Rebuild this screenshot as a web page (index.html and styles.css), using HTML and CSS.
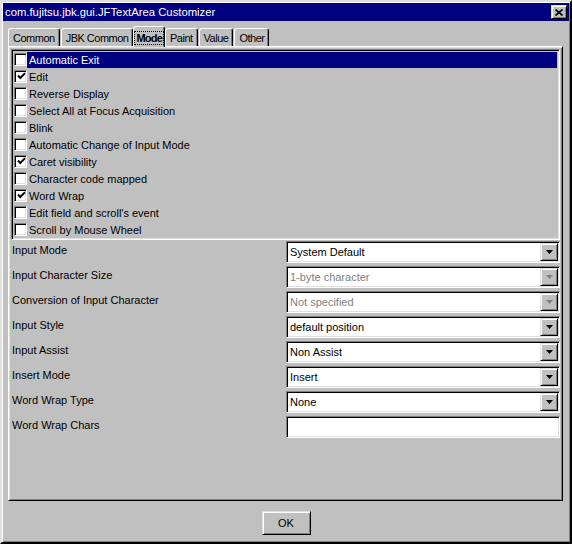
FILE: index.html
```html
<!DOCTYPE html>
<html lang="en">
<head>
    <meta charset="UTF-8">
    <title>com.fujitsu.jbk.gui.JFTextArea Customizer</title>
    <link rel="stylesheet" href="styles.css">
</head>
<body>

    <div class="window">
        <div class="titlebar">
            <span class="title">com.fujitsu.jbk.gui.JFTextArea Customizer</span>
            <button class="close">
                <svg width="8" height="7" viewBox="0 0 8 7"><path d="M0.5 0.5 L7.5 6.5 M7.5 0.5 L0.5 6.5" stroke="#000" stroke-width="1.7" fill="none"/></svg>
            </button>
        </div>

        <div class="body">
            <div class="tabs">
                <div class="tab">Common</div>
                <div class="tab">JBK Common</div>
                <div class="tab selected"><span class="focus">Mode</span></div>
                <div class="tab">Paint</div>
                <div class="tab">Value</div>
                <div class="tab">Other</div>
            </div>

            <div class="panel">
                <div class="list">
                    <div class="item"><span class="check"></span><span class="label active">Automatic Exit</span></div>
                    <div class="item"><span class="check on"><svg width="9" height="9" viewBox="0 0 9 9"><path d="M1 3.5 L3.3 6 L8 1.2" stroke="#000" stroke-width="1.9" fill="none"/></svg></span><span class="label">Edit</span></div>
                    <div class="item"><span class="check"></span><span class="label">Reverse Display</span></div>
                    <div class="item"><span class="check"></span><span class="label">Select All at Focus Acquisition</span></div>
                    <div class="item"><span class="check"></span><span class="label">Blink</span></div>
                    <div class="item"><span class="check"></span><span class="label">Automatic Change of Input Mode</span></div>
                    <div class="item"><span class="check on"><svg width="9" height="9" viewBox="0 0 9 9"><path d="M1 3.5 L3.3 6 L8 1.2" stroke="#000" stroke-width="1.9" fill="none"/></svg></span><span class="label">Caret visibility</span></div>
                    <div class="item"><span class="check"></span><span class="label">Character code mapped</span></div>
                    <div class="item"><span class="check on"><svg width="9" height="9" viewBox="0 0 9 9"><path d="M1 3.5 L3.3 6 L8 1.2" stroke="#000" stroke-width="1.9" fill="none"/></svg></span><span class="label">Word Wrap</span></div>
                    <div class="item"><span class="check"></span><span class="label">Edit field and scroll's event</span></div>
                    <div class="item"><span class="check"></span><span class="label">Scroll by Mouse Wheel</span></div>
                </div>

                <div class="form">
                    <div class="row">
                        <span class="name">Input Mode</span>
                        <div class="combo"><span class="value">System Default</span><span class="drop"><svg width="7" height="4" viewBox="0 0 7 4"><path d="M0 0 H7 L3.5 4 Z" fill="#000"/></svg></span></div>
                    </div>
                    <div class="row">
                        <span class="name">Input Character Size</span>
                        <div class="combo disabled"><span class="value">1-byte character</span><span class="drop"><svg width="7" height="4" viewBox="0 0 7 4"><path d="M0 0 H7 L3.5 4 Z" fill="#808080"/></svg></span></div>
                    </div>
                    <div class="row">
                        <span class="name">Conversion of Input Character</span>
                        <div class="combo disabled"><span class="value">Not specified</span><span class="drop"><svg width="7" height="4" viewBox="0 0 7 4"><path d="M0 0 H7 L3.5 4 Z" fill="#808080"/></svg></span></div>
                    </div>
                    <div class="row">
                        <span class="name">Input Style</span>
                        <div class="combo"><span class="value">default position</span><span class="drop"><svg width="7" height="4" viewBox="0 0 7 4"><path d="M0 0 H7 L3.5 4 Z" fill="#000"/></svg></span></div>
                    </div>
                    <div class="row">
                        <span class="name">Input Assist</span>
                        <div class="combo"><span class="value">Non Assist</span><span class="drop"><svg width="7" height="4" viewBox="0 0 7 4"><path d="M0 0 H7 L3.5 4 Z" fill="#000"/></svg></span></div>
                    </div>
                    <div class="row">
                        <span class="name">Insert Mode</span>
                        <div class="combo"><span class="value">Insert</span><span class="drop"><svg width="7" height="4" viewBox="0 0 7 4"><path d="M0 0 H7 L3.5 4 Z" fill="#000"/></svg></span></div>
                    </div>
                    <div class="row">
                        <span class="name">Word Wrap Type</span>
                        <div class="combo"><span class="value">None</span><span class="drop"><svg width="7" height="4" viewBox="0 0 7 4"><path d="M0 0 H7 L3.5 4 Z" fill="#000"/></svg></span></div>
                    </div>
                    <div class="row">
                        <span class="name">Word Wrap Chars</span>
                        <div class="combo field"></div>
                    </div>
                </div>
            </div>

            <div class="footer">
                <button class="ok">OK</button>
            </div>
        </div>
    </div>

</body>
</html>
```

FILE: styles.css
```css
* {
    margin: 0;
    padding: 0;
    box-sizing: border-box;
}

body {
    font-family: 'Liberation Sans', Arial, sans-serif;
    font-size: 11px;
    color: #000;
    background: #c0c0c0;
}

.window {
    width: 572px;
    height: 544px;
    padding: 1px;
    border: 2px solid;
    border-color: #dfdfdf #000 #000 #dfdfdf;
    box-shadow: inset 1px 1px #fff, inset -1px -1px #808080;
    display: flex;
    flex-direction: column;
}

.titlebar {
    height: 18px;
    background: #000080;
    color: #fff;
    display: flex;
    align-items: center;
    justify-content: space-between;
    padding: 0 2px 0 2px;
}

.title {
    font-size: 11.3px;
}

button {
    font-family: inherit;
    font-size: 11px;
    background: #c0c0c0;
    border: 1px solid;
    border-color: #dfdfdf #000 #000 #dfdfdf;
    box-shadow: inset 1px 1px #fff, inset -1px -1px #808080;
    display: flex;
    align-items: center;
    justify-content: center;
}

.close {
    width: 16px;
    height: 14px;
}

.body {
    flex: 1;
    display: flex;
    flex-direction: column;
    padding: 0 6px 0 5px;
}

/* tabs */
.tabs {
    margin-top: 5px;
    height: 20px;
    display: flex;
    align-items: flex-end;
    gap: 1px;
}

.tab {
    height: 18px;
    padding: 3px 4px 0;
    line-height: 13px;
    letter-spacing: -0.5px;
    background: #c0c0c0;
    border: 1px solid;
    border-bottom: none;
    border-color: #fff #000 #000 #fff;
    border-radius: 3px 3px 0 0;
    box-shadow: inset -1px 0 #808080;
}

.tab.selected {
    height: 21px;
    padding: 5px 1px 0;
    margin: 0 -1px -1px;
    font-weight: bold;
    letter-spacing: -0.8px;
    position: relative;
    z-index: 1;
}

.focus {
    outline: 1px dotted #000;
    outline-offset: 0;
    padding: 0 1px;
}

/* panel */
.panel {
    height: 455px;
    padding: 2px 2px 0;
    border: 1px solid;
    border-color: #fff #000 #000 #fff;
    box-shadow: inset 1px 1px #dfdfdf, inset -1px -1px #808080;
}

.list {
    height: 191px;
    border: 1px solid;
    border-color: #808080 #fff #fff #808080;
    box-shadow: inset 1px 1px #000, inset -1px -1px #dfdfdf;
    padding: 1px 2px 1px 2px;
}

.item {
    height: 17px;
    display: flex;
    align-items: center;
}

.check {
    width: 13px;
    height: 13px;
    flex: none;
    background: #fff;
    border: 1px solid;
    border-color: #808080 #fff #fff #808080;
    box-shadow: inset 1px 1px #000, inset -1px -1px #dfdfdf;
    display: flex;
    align-items: center;
    justify-content: center;
}

.check svg {
    margin: 0 0 0 1px;
}

.label {
    flex: 1;
    line-height: 16px;
    padding-left: 2px;
}

.label.active {
    background: #000080;
    color: #fff;
}

/* form rows */
.form {
    padding: 0 0 0 1px;
}

.row {
    height: 25px;
    display: flex;
    padding-top: 1px;
}

.name {
    flex: 1;
    line-height: 13px;
    padding-top: 3px;
}

.combo {
    width: 274px;
    height: 22px;
    padding: 1px;
    background: #fff;
    border: 1px solid;
    border-color: #808080 #fff #fff #808080;
    box-shadow: inset 1px 1px #000, inset -1px -1px #dfdfdf;
    display: flex;
    align-items: center;
}

.value {
    flex: 1;
    padding-left: 2px;
}

.drop {
    width: 18px;
    height: 18px;
    background: #c0c0c0;
    border: 1px solid;
    border-color: #dfdfdf #000 #000 #dfdfdf;
    box-shadow: inset 1px 1px #fff, inset -1px -1px #808080;
    display: flex;
    align-items: center;
    justify-content: center;
}

.disabled .value {
    color: #808080;
}

/* footer */
.footer {
    flex: 1;
    display: flex;
    justify-content: center;
    padding-top: 10px;
    padding-left: 1px;
}

.ok {
    width: 49px;
    height: 24px;
}
```
